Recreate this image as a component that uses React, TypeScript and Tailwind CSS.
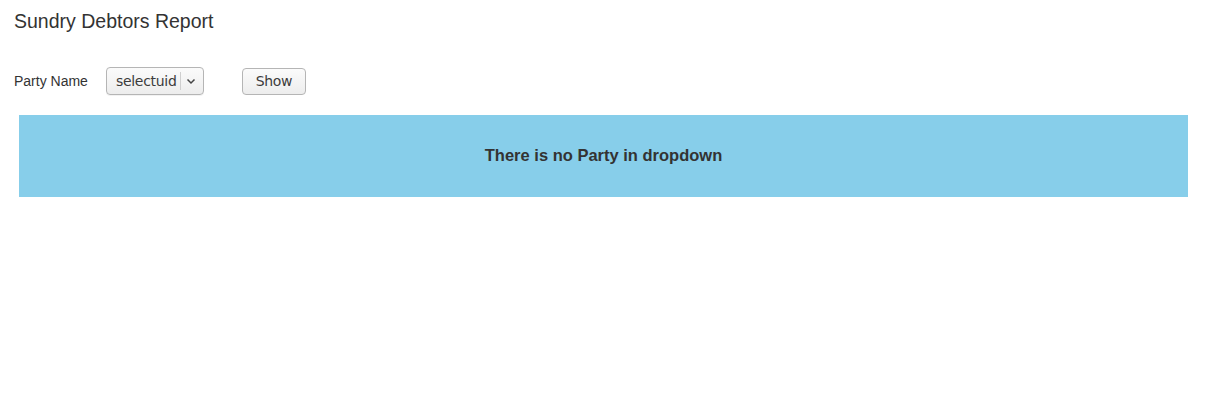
export default function App() {
  return (
    <div className="min-h-[407px] bg-white text-[#333] font-['Liberation_Sans',Arial,sans-serif]">
      <h1 className="pl-[14px] pt-[10px] text-[19.5px] leading-[22px] font-normal">Sundry Debtors Report</h1>

      <div className="flex items-center pl-[14px] mt-[35px] h-[28px]">
        <label className="text-[14px] mr-[18px]">Party Name</label>
        {/* fake native select */}
        <div className="flex items-center h-[28px] w-[98px] rounded-[4px] border border-[#b5b5b5] bg-gradient-to-b from-[#fbfbfb] to-[#ededed] shadow-[0_1px_0_rgba(0,0,0,0.05)] font-['DejaVu_Sans','Open_Sans',sans-serif] text-[14px] text-[#3c3c3c]">
          <span className="pl-[9px] pr-[4px] tracking-[-0.3px]">selectuid</span>
          <span className="w-px h-[18px] bg-[#cfcfcf]" />
          <svg className="ml-[5px]" width="10" height="7" viewBox="0 0 10 7">
            <path d="M1.5 1.5 L5 5 L8.5 1.5" fill="none" stroke="#444" strokeWidth="1.5" />
          </svg>
        </div>
        <button className="ml-[38px] h-[27px] w-[64px] rounded-[4px] border border-[#b5b5b5] bg-gradient-to-b from-[#fbfbfb] to-[#ededed] font-['DejaVu_Sans','Open_Sans',sans-serif] text-[14px] text-[#3c3c3c] tracking-[-0.3px]">
          Show
        </button>
      </div>

      <div className="mx-[19px] mt-[20px] w-[1169px] h-[82px] bg-[#87ceea] flex items-center justify-center">
        <p className="text-[16.5px] font-bold text-[#333] mt-[-1px]">There is no Party in dropdown</p>
      </div>
    </div>
  );
}
